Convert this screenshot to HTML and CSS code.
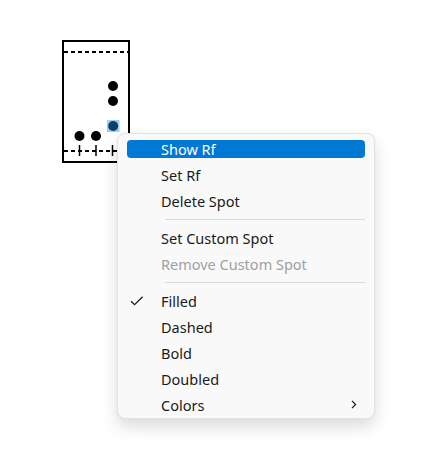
FILE: index.html
```html
<!DOCTYPE html>
<html>
<head>
<meta charset="utf-8">
<link rel="stylesheet" href="styles.css">
</head>
<body>
<div class="canvas">
  <svg class="plate" width="429" height="461" viewBox="0 0 429 461">
    <rect x="63" y="41" width="66" height="121" fill="#fff" stroke="#000" stroke-width="2"/>
    <line x1="64" y1="52" x2="128" y2="52" stroke="#000" stroke-width="2" stroke-dasharray="4 3"/>
    <line x1="64" y1="151" x2="128" y2="151" stroke="#000" stroke-width="2" stroke-dasharray="4 3"/>
    <line x1="79.5" y1="145" x2="79.5" y2="156" stroke="#000" stroke-width="1.5"/>
    <line x1="96" y1="145" x2="96" y2="156" stroke="#000" stroke-width="1.5"/>
    <line x1="112.5" y1="145" x2="112.5" y2="156" stroke="#000" stroke-width="1.5"/>
    <circle cx="113" cy="86" r="5" fill="#000"/>
    <circle cx="113" cy="101" r="5" fill="#000"/>
    <rect x="107" y="120" width="12.5" height="12" fill="#9fcdf2"/>
    <circle cx="113.2" cy="126" r="5" fill="#0b3f6e"/>
    <circle cx="79.5" cy="136" r="5" fill="#000"/>
    <circle cx="96" cy="136" r="5" fill="#000"/>
  </svg>
  <div class="menu">
    <div class="item active"><span class="label">Show Rf</span></div>
    <div class="item"><span class="label">Set Rf</span></div>
    <div class="item"><span class="label">Delete Spot</span></div>
    <div class="sep"></div>
    <div class="item"><span class="label">Set Custom Spot</span></div>
    <div class="item disabled"><span class="label">Remove Custom Spot</span></div>
    <div class="sep"></div>
    <div class="item"><span class="check"><svg width="14" height="10" viewBox="0 0 14 10"><path d="M1 5.2 L4.6 8.6 L12.6 0.8" fill="none" stroke="#1a1a1a" stroke-width="1.3"/></svg></span><span class="label">Filled</span></div>
    <div class="item"><span class="label">Dashed</span></div>
    <div class="item"><span class="label">Bold</span></div>
    <div class="item"><span class="label">Doubled</span></div>
    <div class="item"><span class="label">Colors</span><span class="arrow"><svg width="6" height="9" viewBox="0 0 6 9"><path d="M1 0.8 L4.6 4.5 L1 8.2" fill="none" stroke="#1a1a1a" stroke-width="1.2"/></svg></span></div>
  </div>
</div>
</body>
</html>
```
FILE: styles.css
```css
html, body {
  margin: 0;
  padding: 0;
  background: #fff;
}
.canvas {
  position: relative;
  width: 429px;
  height: 461px;
  overflow: hidden;
  font-family: "Noto Sans", "Open Sans", sans-serif;
}
.plate {
  display: block;
}
.menu {
  position: absolute;
  left: 117px;
  top: 133px;
  width: 256px;
  padding: 2px 0 0;
  background: #f9f9f9;
  border: 1px solid #e3e3e3;
  border-radius: 8px;
  box-shadow: 0 8px 16px rgba(0, 0, 0, 0.14), 0 0 2px rgba(0, 0, 0, 0.06);
  display: flex;
  flex-direction: column;
}
.item {
  position: relative;
  height: 26px;
  display: flex;
  align-items: center;
  padding-left: 43px;
  font-size: 14.5px;
  color: #1a1a1a;
  white-space: nowrap;
}
.item.active::before {
  content: "";
  position: absolute;
  left: 9px;
  right: 9px;
  top: 4px;
  bottom: 4px;
  background: #0078d4;
  border-radius: 4px;
}
.item .label {
  position: relative;
}
.item.active {
  color: #fff;
}
.item.disabled {
  color: #a0a0a0;
}
.check {
  position: absolute;
  left: 12px;
  top: 8px;
  line-height: 0;
}
.arrow {
  position: absolute;
  right: 17px;
  top: 8px;
  line-height: 0;
}
.sep {
  height: 11px;
  display: flex;
  align-items: center;
  padding: 0 9px 0 47px;
}
.sep::after {
  content: "";
  flex: 1;
  height: 1px;
  background: #d9d9d9;
}
```
